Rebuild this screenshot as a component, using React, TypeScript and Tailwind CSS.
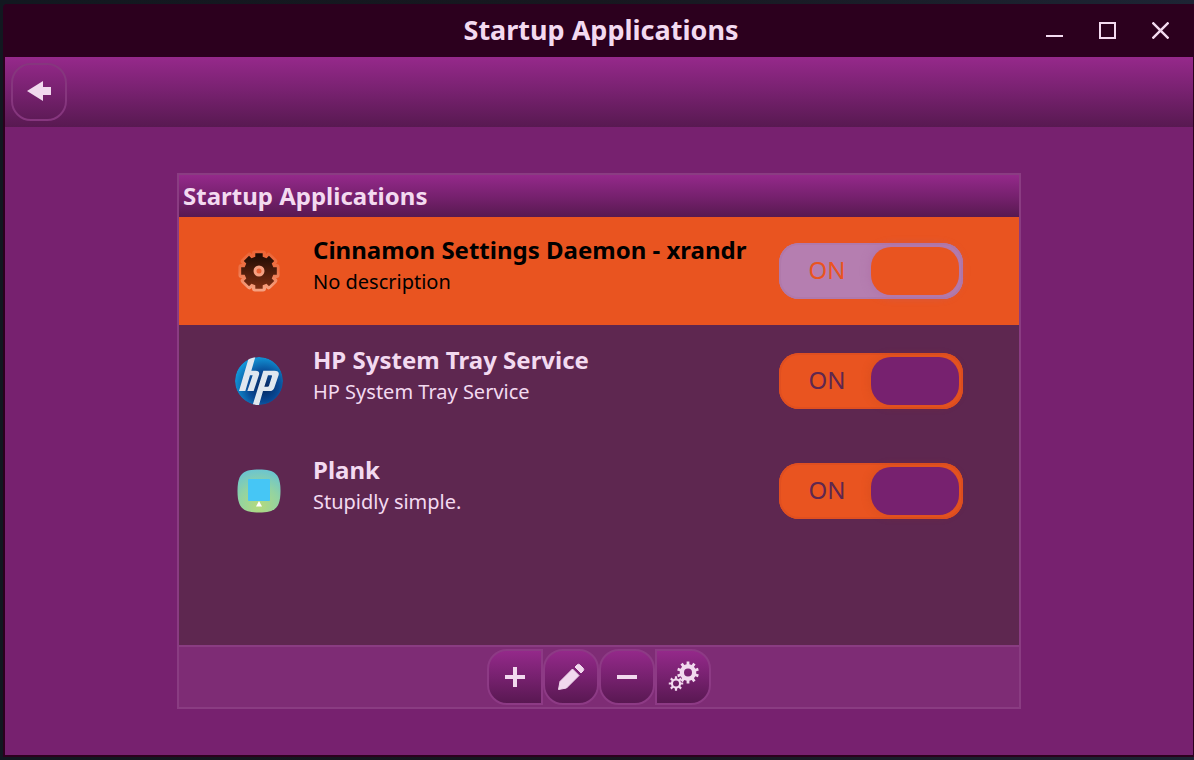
import React, { useState } from 'react';

// Builds a gear outline with evenly spaced square teeth around (cx, cy)
const gearPath = (cx: number, cy: number, outer: number, inner: number, teeth: number, width: number, hole: number) => {
  const points: string[] = [];
  const outerHalf = Math.asin(width / 2 / outer);
  const innerHalf = Math.asin(width / 2 / inner);
  for (let i = 0; i < teeth; i++) {
    const a = (i * 2 * Math.PI) / teeth - Math.PI / 2;
    [
      [inner, a - innerHalf],
      [outer, a - outerHalf],
      [outer, a + outerHalf],
      [inner, a + innerHalf],
    ].forEach(([r, t]) => {
      points.push(`${(cx + r * Math.cos(t)).toFixed(2)} ${(cy + r * Math.sin(t)).toFixed(2)}`);
    });
  }
  return `M${points.join('L')}Z M${cx - hole} ${cy}a${hole} ${hole} 0 1 0 ${hole * 2} 0a${hole} ${hole} 0 1 0 ${-hole * 2} 0Z`;
};

const GearIcon = () => (
  <svg className="w-12 h-12" viewBox="0 0 48 48" aria-hidden="true">
    <defs>
      <linearGradient id="gear" x1="0" y1="0" x2="0" y2="1">
        <stop offset="0" stopColor="#1c0a04" />
        <stop offset="1" stopColor="#7d2d12" />
      </linearGradient>
      <linearGradient id="gearGlow" x1="0" y1="0" x2="0" y2="1">
        <stop offset="0" stopColor="#ec6638" />
        <stop offset="0.5" stopColor="#ee7449" />
        <stop offset="1" stopColor="#f5a080" />
      </linearGradient>
    </defs>
    <path d={gearPath(24, 24, 18, 14, 8, 8, 5)} fill="url(#gearGlow)" stroke="url(#gearGlow)" strokeWidth="6" strokeLinejoin="round" />
    <path d={gearPath(24, 24, 18.2, 14.8, 8, 7.4, 5)} fill="url(#gear)" fillRule="evenodd" />
    <circle cx="24" cy="24" r="4" fill="#ea6034" stroke="#f5a083" strokeWidth="3" />
  </svg>
);

const HpIcon = () => (
  <svg className="w-12 h-12" viewBox="0 0 144 144" aria-hidden="true">
    <defs>
      <radialGradient id="hp" cx="0.6" cy="0.62" r="0.62">
        <stop offset="0" stopColor="#04245c" />
        <stop offset="0.5" stopColor="#084894" />
        <stop offset="1" stopColor="#1294d6" />
      </radialGradient>
    </defs>
    <clipPath id="hpDisc">
      <circle cx="72" cy="72" r="72" />
    </clipPath>
    <g clipPath="url(#hpDisc)">
      <circle cx="72" cy="72" r="72" fill="url(#hp)" />
      <g fill="#dfe7ef">
        <path d="M42 0H61L49 41H62Q75 41 72 53L56 102H37L53 55H45L31 102H12Z" />
        <path fillRule="evenodd" d="M85 41H118Q134 41 131 54L118 92Q114 102 104 102H84L72 144H53ZM99 55L88 89H98Q101 89 102 86L111 58Q112 55 109 55Z" />
      </g>
    </g>
  </svg>
);

const PlankIcon = () => (
  <svg className="w-12 h-12" viewBox="0 0 48 48" aria-hidden="true">
    <defs>
      <radialGradient id="plank" cx="0.5" cy="0.85" r="0.85">
        <stop offset="0" stopColor="#b5da7c" />
        <stop offset="0.55" stopColor="#92d3a2" />
        <stop offset="1" stopColor="#6cc5cf" />
      </radialGradient>
    </defs>
    <path d="M24 2.5C40 2.5 45.5 7 45.5 24S40 45.500 24 45.5 2.5 41 2.5 24 8 2.5 24 2.5Z" fill="url(#plank)" />
    <rect x="13" y="12" width="22" height="22" rx="1" fill="#46c6f5" />
    <path d="M24 34L27 39.5H21Z" fill="#fff" />
  </svg>
);

interface StartupApp {
  name: string;
  description: string;
  icon: React.ReactNode;
}

const APPS: StartupApp[] = [
  { name: 'Cinnamon Settings Daemon - xrandr', description: 'No description', icon: <GearIcon /> },
  { name: 'HP System Tray Service', description: 'HP System Tray Service', icon: <HpIcon /> },
  { name: 'Plank', description: 'Stupidly simple.', icon: <PlankIcon /> },
];

interface ToggleProps {
  label: string;
  selected: boolean;
}

const Toggle: React.FC<ToggleProps> = ({ label, selected }) => {
  const [on, setOn] = useState(true);

  return (
    <label
      className={`flex shrink-0 w-[184px] h-14 p-1 rounded-[20px] text-2xl cursor-pointer ${on ? '' : 'flex-row-reverse'} ${
        selected
          ? 'bg-[#b57eb0] text-[#e95420] shadow-[inset_0_0_0_2px_#b079ab]'
          : 'bg-[#e95420] text-[#5e2750] shadow-[inset_0_0_0_2px_#e04f20]'
      }`}
    >
      <input type="checkbox" role="switch" aria-label={label} className="sr-only" checked={on} onChange={() => setOn(!on)} />
      <span className="flex-1 flex items-center justify-center pb-0.5">{on ? 'ON' : 'OFF'}</span>
      <span
        className={`w-[88px] rounded-[20px] ${
          selected ? 'bg-[#e95420] shadow-[0_0_8px_2px_#a9699f66]' : 'bg-[#77216f] shadow-[0_0_8px_2px_#b0401833]'
        }`}
      ></span>
    </label>
  );
};

const BUTTON = 'flex items-center justify-center w-14 h-14 border-2 border-[#8d3a85] bg-linear-to-b from-[#94298a] via-[#77216f] to-[#591852] text-[#f1d9ee]';

export default function App() {
  const [selected, setSelected] = useState(0);

  return (
    <div className="min-h-screen flex flex-col pt-1 pl-[3px] pb-[3px] bg-linear-to-r from-[#121820] via-[#17171f] to-[#1d2434] font-['Noto_Sans',sans-serif] text-[#f3daf0]">
      <div className="flex-1 flex flex-col border-l-2 border-b-2 border-r border-[#2c001e] rounded-tl-sm bg-[#77216f]">
        {/* Title bar */}
        <header className="grid grid-cols-[1fr_auto_1fr] items-center h-[53px] pl-7 pr-6 bg-[#2c001e]">
          <span></span>
          <h1 className="text-[27px] font-bold">Startup Applications</h1>
          <div className="flex justify-end gap-9">
            <button aria-label="Minimize">
              <svg width="17" height="17" viewBox="0 0 17 17"><path d="M0 14H17" stroke="currentColor" strokeWidth="2" /></svg>
            </button>
            <button aria-label="Maximize">
              <svg width="17" height="17" viewBox="0 0 17 17"><path d="M1 1H16V16H1Z" fill="none" stroke="currentColor" strokeWidth="2" /></svg>
            </button>
            <button aria-label="Close">
              <svg width="17" height="17" viewBox="0 0 17 17"><path d="M.5 .5L16.5 16.5M16.5 .5L.5 16.5" stroke="currentColor" strokeWidth="2.4" /></svg>
            </button>
          </div>
        </header>

        {/* Navigation bar */}
        <nav className="flex items-center h-[70px] px-1.5 bg-linear-to-b from-[#96298b] via-[#77216f] to-[#581951]">
          <button aria-label="Back" className="flex items-center justify-center w-14 h-[58px] pb-0.5 rounded-[20px] border-2 border-[#86367e]">
            <svg width="24" height="20" viewBox="0 0 24 20"><path d="M0 10L16 0V6H24V14H16V20Z" fill="#f1d9ee" /></svg>
          </button>
        </nav>

        <main className="flex-1 flex flex-col py-[46px]">
          <section className="flex-1 flex flex-col w-full max-w-[844px] mx-auto border-2 border-[#8a3c82]">
            <h2 className="h-[42px] px-1 leading-[42px] text-2xl font-bold bg-linear-to-b from-[#94298a] via-[#77216f] to-[#581951]">Startup Applications</h2>

            <ul className="flex-1 flex flex-col gap-0.5 bg-[#5e2750]">
              {APPS.map((app, i) => (
                <li
                  key={app.name}
                  onClick={() => setSelected(i)}
                  className={`flex items-center h-[108px] px-14 ${selected === i ? 'bg-[#e95420] text-black' : ''}`}
                >
                  {app.icon}
                  <div className="flex-1 pl-[30px] pb-2.5">
                    <h3 className="text-2xl font-bold">{app.name}</h3>
                    <p className="text-xl leading-8">{app.description}</p>
                  </div>
                  <Toggle label={app.name} selected={selected === i} />
                </li>
              ))}
            </ul>

            {/* Actions */}
            <div className="flex justify-center items-center h-[62px] border-t-2 border-[#8a3c82] bg-[#7e2c75]">
              <button aria-label="Add" className={`${BUTTON} rounded-l-[20px]`}>
                <svg width="20" height="20" viewBox="0 0 20 20"><path d="M10 0V20M0 10H20" stroke="currentColor" strokeWidth="4" /></svg>
              </button>
              <button aria-label="Edit" className={`${BUTTON} rounded-[20px]`}>
                <svg width="32" height="32" viewBox="0 0 32 32" fill="currentColor" stroke="currentColor" strokeWidth="1" strokeLinejoin="round">
                  <path d="M3.5 28.5L5 20.5L17.5 8L24 14.5L11.5 27Z" />
                  <path d="M20 6L22 4Q23.500 2.500 25 4L28 7Q29.500 8.500 28 10L26 12Z" />
                </svg>
              </button>
              <button aria-label="Remove" className={`${BUTTON} rounded-[20px]`}>
                <svg width="20" height="20" viewBox="0 0 20 20"><path d="M0 10H20" stroke="currentColor" strokeWidth="4" /></svg>
              </button>
              <button aria-label="Run now" className={`${BUTTON} rounded-r-[20px]`}>
                <svg width="32" height="32" viewBox="0 0 32 32" fill="currentColor" fillRule="evenodd">
                  <path d={gearPath(21, 11.5, 11, 8.3, 10, 2.8, 4)} />
                  <path d={gearPath(9, 22.5, 7.3, 5.2, 8, 2.2, 3)} />
                </svg>
              </button>
            </div>
          </section>
        </main>
      </div>
    </div>
  );
}
